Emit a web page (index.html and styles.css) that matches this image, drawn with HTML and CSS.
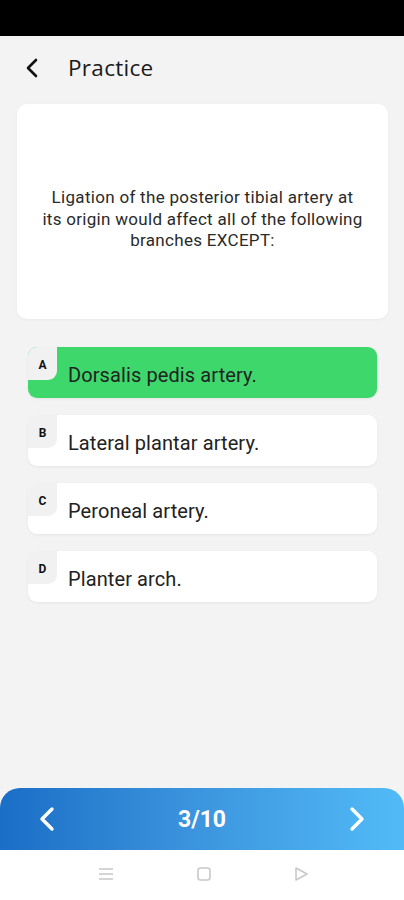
FILE: index.html
```html
<!DOCTYPE html>
<html>
<head>
<meta charset="utf-8">
<link rel="stylesheet" href="styles.css">
</head>
<body>
<div class="screen">
  <div class="statusbar"></div>
  <header class="header">
    <svg class="back" width="14" height="20" viewBox="0 0 14 20"><path d="M11 2 L3 10 L11 18" fill="none" stroke="#111" stroke-width="2.6" stroke-linecap="round" stroke-linejoin="round"/></svg>
    <h1 class="title">Practice</h1>
  </header>
  <main class="content">
    <section class="question">
      <p>Ligation of the posterior tibial artery at<br>its origin would affect all of the following<br>branches EXCEPT:</p>
    </section>
    <ul class="options">
      <li class="option correct"><span class="badge">A</span><span class="text">Dorsalis pedis artery.</span></li>
      <li class="option"><span class="badge">B</span><span class="text">Lateral plantar artery.</span></li>
      <li class="option"><span class="badge">C</span><span class="text">Peroneal artery.</span></li>
      <li class="option"><span class="badge">D</span><span class="text">Planter arch.</span></li>
    </ul>
  </main>
  <nav class="pager">
    <svg width="20" height="28" viewBox="0 0 20 28"><path d="M15 4 L5 14 L15 24" fill="none" stroke="#fff" stroke-width="3.4" stroke-linecap="round" stroke-linejoin="round"/></svg>
    <span class="count">3/10</span>
    <svg width="20" height="28" viewBox="0 0 20 28"><path d="M5 4 L15 14 L5 24" fill="none" stroke="#fff" stroke-width="3.4" stroke-linecap="round" stroke-linejoin="round"/></svg>
  </nav>
  <div class="sysnav">
    <svg width="16" height="14" viewBox="0 0 16 14"><path d="M1 2 H15 M1 7 H15 M1 12 H15" stroke="#c8c8c8" stroke-width="1.6"/></svg>
    <svg width="16" height="16" viewBox="0 0 16 16"><rect x="2" y="2" width="12" height="12" rx="2.5" fill="none" stroke="#c8c8c8" stroke-width="1.6"/></svg>
    <svg width="16" height="16" viewBox="0 0 16 16"><path d="M3 2 L14 8 L3 14 Z" fill="none" stroke="#c8c8c8" stroke-width="1.6" stroke-linejoin="round"/></svg>
  </div>
</div>
</body>
</html>
```

FILE: styles.css
```css
* { box-sizing: border-box; }
html, body { margin: 0; padding: 0; }
body { background: #f3f3f3; font-family: Roboto, "Liberation Sans", sans-serif; }
.screen { width: 404px; height: 900px; display: flex; flex-direction: column; background: #f3f3f3; }
.statusbar { height: 36px; background: #000; flex-shrink: 0; }
.header { height: 68px; display: flex; align-items: center; padding-left: 25px; padding-bottom: 5px; flex-shrink: 0; }
.back { margin-right: 29px; }
.title { margin: 0; font-family: "Open Sans", "Noto Sans", sans-serif; font-weight: 500; font-size: 22.5px; color: #1a1a1a; letter-spacing: 0.3px; }
.content { flex: 1; padding: 0 16px 0 17px; }
.question { height: 215px; background: #fff; border-radius: 10px; display: flex; align-items: center; justify-content: center; padding: 16px 10px 0; box-shadow: 0 1px 3px rgba(0,0,0,0.04); }
.question p { margin: 0; text-align: center; font-size: 17px; line-height: 21.5px; color: #2a2a2a; letter-spacing: 0.3px; }
.options { list-style: none; margin: 28px 0 0; padding: 0 11px; display: flex; flex-direction: column; gap: 17px; }
.option { position: relative; height: 51px; background: #fff; border-radius: 9px; display: flex; align-items: center; box-shadow: 0 1px 3px rgba(0,0,0,0.06); }
.option.correct { background: #3dd76b; }
.badge { position: absolute; left: 0; top: 0; width: 29px; height: 33px; background: #f1f1f1; border-radius: 9px 0 9px 0; font-size: 12px; font-weight: 700; color: #111; display: flex; justify-content: center; padding-top: 12px; line-height: 1; }
.text { margin-left: 40px; margin-top: 4px; font-size: 20px; color: #222; letter-spacing: 0.1px; }
.pager { height: 62px; flex-shrink: 0; border-radius: 20px 20px 0 0; background: linear-gradient(90deg, #1a6ec6 0%, #3a92dc 45%, #52bbf7 100%); display: flex; align-items: center; justify-content: space-between; padding: 0 37px 0 37px; }
.count { color: #fff; font-weight: 700; font-size: 23px; }
.sysnav { height: 50px; background: #fff; flex-shrink: 0; display: flex; align-items: center; justify-content: space-between; padding: 0 95px 2px 98px; }
```
